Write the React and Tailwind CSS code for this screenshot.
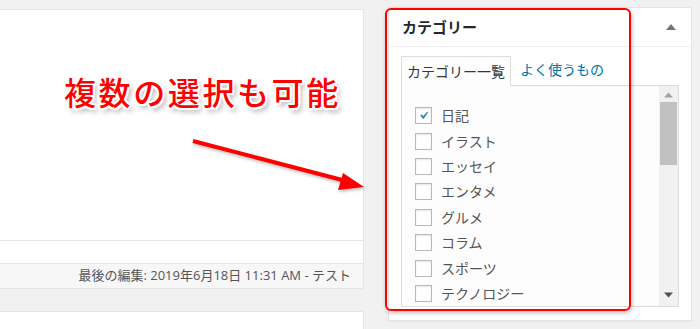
const ITEMS = [
  { label: "日記", checked: true },
  { label: "イラスト" },
  { label: "エッセイ" },
  { label: "エンタメ" },
  { label: "グルメ" },
  { label: "コラム" },
  { label: "スポーツ" },
  { label: "テクノロジー" },
];

const font = "font-['Open_Sans','Noto_Sans_CJK_JP',sans-serif]";

export default function App() {
  return (
    <div className={`relative flex h-[329px] w-[700px] overflow-hidden bg-[#f1f1f1] ${font}`}>
      {/* left: editor area */}
      <div className="w-[364px] shrink-0 pt-[9px]">
        <div className="border-t border-r border-[#e5e5e5] bg-white">
          <div className="h-[230px]" />
          <div className="h-[23px] border-t border-[#e5e5e5]" />
          <div className="flex h-[26px] items-center justify-end border-t border-b border-[#e5e5e5] bg-[#f7f7f7] pr-[12px] text-[13px] text-[#555]">
            最後の編集: 2019年6月18日 11:31 AM - テスト
          </div>
        </div>
        <div className="mt-[22px] h-[30px] border-t border-r border-[#e5e5e5] bg-white" />
      </div>

      {/* right: category box */}
      <div className="ml-[24px] w-[304px] shrink-0 pt-[7px]">
        <div className="border border-[#e5e5e5] bg-white shadow-[0_1px_1px_rgba(0,0,0,0.04)]">
          <div className="flex h-[39px] items-center justify-between border-b border-[#eee] pl-[13px] pr-[15px]">
            <span className="text-[15px] font-bold text-[#23282d]">カテゴリー</span>
            <svg width="10" height="8" viewBox="0 0 10 8">
              <path d="M0 7 L5 1 L10 7 Z" fill="#72777c" />
            </svg>
          </div>
          <div className="pl-[12px] pr-[12px] pt-[8px] pb-[13px]">
            <div className="flex items-end">
              <div className="relative z-10 -mb-px h-[30px] border border-b-0 border-[#ddd] bg-[#fdfdfd] px-[5px] pt-[4px] text-[14px] text-[#32373c]">
                カテゴリー一覧
              </div>
              <div className="h-[30px] px-[9px] pt-[4px] text-[14px] text-[#0073aa]">よく使うもの</div>
            </div>
            <div className="flex h-[222px] border border-[#ddd] bg-[#fdfdfd]">
              <ul className="flex-1 pl-[13px] pt-[17px]">
                {ITEMS.map((item) => (
                  <li key={item.label} className="flex h-[25.4px] items-center gap-[9px] text-[14px] text-[#555]">
                    <span className="flex h-[17px] w-[17px] items-center justify-center border border-[#b4b9be] bg-white shadow-[inset_0_1px_2px_rgba(0,0,0,0.1)]">
                      {item.checked && (
                        <svg width="17" height="17" viewBox="0 0 20 20">
                          <path d="M14.83 4.89l1.34.94-5.81 8.38H9.02L5.78 9.67l1.34-1.25 2.57 2.4z" fill="#1e8cbe" />
                        </svg>
                      )}
                    </span>
                    {item.label}
                  </li>
                ))}
              </ul>
              <div className="flex w-[19px] flex-col items-center bg-[#f1f1f1] py-[4px]">
                <svg width="9" height="6" viewBox="0 0 9 6" className="mt-[2px]">
                  <path d="M0 5.5 L4.5 0.5 L9 5.5 Z" fill="#a3a3a3" />
                </svg>
                <div className="mt-[4px] h-[63px] w-[17px] bg-[#c1c1c1]" />
                <div className="flex-1" />
                <svg width="9" height="6" viewBox="0 0 9 6" className="mb-[4px]">
                  <path d="M0 0.5 L9 0.5 L4.5 5.5 Z" fill="#505050" />
                </svg>
              </div>
            </div>
          </div>
        </div>
      </div>

      {/* annotation: red outline */}
      <div className="absolute left-[385px] top-[8px] h-[303px] w-[246px] rounded-[6px] border-2 border-[#ff0000] shadow-[1px_2px_4px_rgba(0,0,0,0.25)]" />

      {/* annotation: caption */}
      <div
        className="absolute left-[64px] top-[73px] font-['Noto_Sans_CJK_JP',sans-serif] text-[32px] font-medium leading-[36px] tracking-[2.6px] text-[#ff0000] [text-shadow:2px_0_0_#fff,-2px_0_0_#fff,0_2px_0_#fff,0_-2px_0_#fff,1.5px_1.5px_0_#fff,-1.5px_-1.5px_0_#fff,1.5px_-1.5px_0_#fff,-1.5px_1.5px_0_#fff,3px_4px_5px_rgba(0,0,0,0.35)]"
      >
        複数の選択も可能
      </div>

      {/* annotation: arrow */}
      <svg className="absolute left-0 top-0" width="700" height="329" viewBox="0 0 700 329">
        <defs>
          <filter id="sh" x="-10%" y="-50%" width="120%" height="200%">
            <feDropShadow dx="1" dy="2" stdDeviation="1.5" floodColor="#000" floodOpacity="0.25" />
          </filter>
        </defs>
        <g filter="url(#sh)">
          <line x1="193" y1="141" x2="346" y2="181" stroke="#ff0000" strokeWidth="4" />
          <path d="M364 187 L343 173 L338 190 Z" fill="#ff0000" />
        </g>
      </svg>
    </div>
  );
}
